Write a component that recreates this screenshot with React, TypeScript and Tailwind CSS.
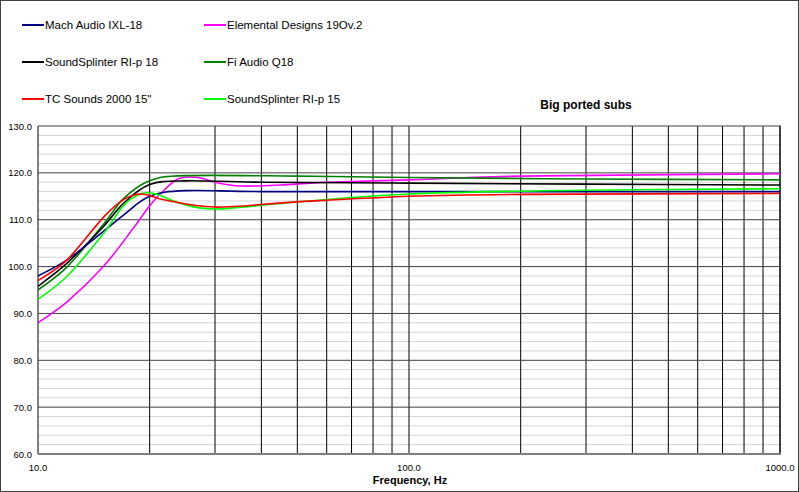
import React from "react";

const X = (f: number) => 37 + 371 * Math.log10(f / 10);
const Y = (d: number) => 125 + (130 - d) * 4.686;

const curves: { c: string; p: [number, number][] }[] = [
  { c: "#ff00ff", p: [[10, 88], [12, 92.5], [15, 100], [18, 108], [20, 113], [22, 116.5], [24, 118.8], [27, 119], [30, 118], [35, 117.2], [45, 117.4], [60, 118], [100, 118.5], [200, 119.3], [1000, 119.8]] },
  { c: "#008000", p: [[10, 95], [12, 100], [15, 109], [17, 114.5], [20, 118.3], [25, 119.4], [50, 119.3], [100, 119], [300, 118.7], [1000, 118.5]] },
  { c: "#000000", p: [[10, 95.8], [12, 100.8], [15, 108.5], [17, 113.5], [20, 117.5], [25, 118.3], [40, 118], [100, 117.8], [300, 117.6], [1000, 117.4]] },
  { c: "#000080", p: [[10, 98], [12, 101.5], [15, 107.5], [17, 111], [20, 115], [25, 116.2], [40, 116], [100, 116], [1000, 116]] },
  { c: "#00ff00", p: [[10, 93], [12, 98], [15, 107], [17, 113], [19, 115.6], [21, 115.4], [24, 113.6], [30, 112.3], [50, 113.8], [100, 115.5], [300, 116.3], [1000, 116.6]] },
  { c: "#ff0000", p: [[10, 97], [12, 101.5], [15, 110.5], [17, 114.3], [19, 115.5], [22, 114.2], [30, 112.7], [50, 113.8], [100, 115], [200, 115.4], [1000, 115.6]] },
];

const smooth = (pts: [number, number][]) => {
  const P = pts.map(([f, d]) => [X(f), Y(d)]);
  let s = `M${P[0][0]},${P[0][1]}`;
  for (let i = 0; i < P.length - 1; i++) {
    const p0 = P[Math.max(0, i - 1)], p1 = P[i], p2 = P[i + 1], p3 = P[Math.min(P.length - 1, i + 2)];
    const c1 = [p1[0] + (p2[0] - p0[0]) / 6, p1[1] + (p2[1] - p0[1]) / 6];
    const c2 = [p2[0] - (p3[0] - p1[0]) / 6, p2[1] - (p3[1] - p1[1]) / 6];
    s += ` C${c1[0]},${c1[1]} ${c2[0]},${c2[1]} ${p2[0]},${p2[1]}`;
  }
  return s;
};

const legend = [
  ["#000080", "Mach Audio IXL-18"], ["#ff00ff", "Elemental Designs 19Ov.2"],
  ["#000000", "SoundSplinter RI-p 18"], ["#008000", "Fi Audio Q18"],
  ["#ff0000", 'TC Sounds 2000 15"'], ["#00ff00", "SoundSplinter RI-p 15"],
];

export default function App() {
  const freqs: number[] = [];
  for (let d = 10; d <= 1000; d *= 10) for (let k = 1; k < 10; k++) if (d * k <= 1000) freqs.push(d * k);
  freqs.push(1000);
  const minors: number[] = [];
  for (let d = 60; d <= 130; d += 2) if (d % 10 !== 0) minors.push(d);
  return (
    <div className="w-[799px] h-[492px] bg-white border border-[#404040] relative overflow-hidden" style={{ fontFamily: "Arial, 'Liberation Sans', sans-serif" }}>
      <div className="grid grid-cols-[182px_220px] gap-y-[23px] pt-[17px] pl-[21px] text-[11.5px] leading-[14px] text-black">
        {legend.map(([c, t]) => (
          <div key={t} className="flex items-center">
            <div className="w-[22px] h-[2px] mr-[1px]" style={{ background: c }} />
            <span>{t}</span>
          </div>
        ))}
      </div>
      <svg className="absolute left-0 top-0" width="799" height="492">
        <text x="585" y="108" fontSize="12" fontWeight="bold" textAnchor="middle" fontFamily="Arial, 'Liberation Sans', sans-serif">Big ported subs</text>
        {minors.map((d) => (
          <line key={d} x1={37} x2={780} y1={Y(d)} y2={Y(d)} stroke="#d4d4d4" strokeWidth="1" />
        ))}
        {freqs.map((f, i) => (
          <line key={i} x1={X(f)} x2={X(f)} y1={Y(130)} y2={Y(60)} stroke="#000" strokeWidth="1" />
        ))}
        {[60, 70, 80, 90, 100, 110, 120, 130].map((d) => (
          <g key={d}>
            <line x1={37} x2={780} y1={Y(d)} y2={Y(d)} stroke="#404040" strokeWidth="1" />
            <text x={31} y={Y(d) + 3.5} fontSize="9.5" textAnchor="end" fontFamily="Arial, 'Liberation Sans', sans-serif">{d.toFixed(1)}</text>
          </g>
        ))}
        <line x1={37} x2={780} y1={Y(60)} y2={Y(60)} stroke="#808080" strokeWidth="2" />
        {curves.map((cv) => (
          <path key={cv.c} d={smooth(cv.p)} fill="none" stroke={cv.c} strokeWidth="1.6" strokeLinejoin="round" />
        ))}
        {[10, 100, 1000].map((f) => (
          <text key={f} x={X(f)} y={470} fontSize="9.5" textAnchor="middle" fontFamily="Arial, 'Liberation Sans', sans-serif">{f.toFixed(1)}</text>
        ))}
        <text x="409" y="483" fontSize="11" fontWeight="bold" textAnchor="middle" fontFamily="Arial, 'Liberation Sans', sans-serif">Frequency, Hz</text>
      </svg>
    </div>
  );
}
